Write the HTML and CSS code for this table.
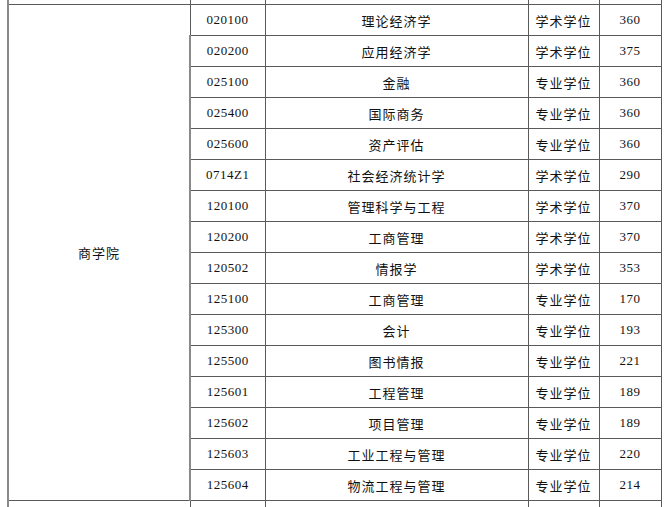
FILE: index.html
```html
<!DOCTYPE html>
<html lang="zh">
<head>
<meta charset="utf-8">
<link rel="stylesheet" href="styles.css">
</head>
<body>
<table class="grid">
  <colgroup>
    <col class="c1"><col class="c2"><col class="c3"><col class="c4"><col class="c5">
  </colgroup>
  <tr class="cut-top"><td></td><td></td><td></td><td></td><td></td></tr>
  <tr><td class="dept" rowspan="16">商学院</td><td class="num">020100</td><td class="zh">理论经济学</td><td class="zh">学术学位</td><td class="num">360</td></tr>
  <tr><td class="num">020200</td><td class="zh">应用经济学</td><td class="zh">学术学位</td><td class="num">375</td></tr>
  <tr><td class="num">025100</td><td class="zh">金融</td><td class="zh">专业学位</td><td class="num">360</td></tr>
  <tr><td class="num">025400</td><td class="zh">国际商务</td><td class="zh">专业学位</td><td class="num">360</td></tr>
  <tr><td class="num">025600</td><td class="zh">资产评估</td><td class="zh">专业学位</td><td class="num">360</td></tr>
  <tr><td class="num">0714Z1</td><td class="zh">社会经济统计学</td><td class="zh">学术学位</td><td class="num">290</td></tr>
  <tr><td class="num">120100</td><td class="zh">管理科学与工程</td><td class="zh">学术学位</td><td class="num">370</td></tr>
  <tr><td class="num">120200</td><td class="zh">工商管理</td><td class="zh">学术学位</td><td class="num">370</td></tr>
  <tr><td class="num">120502</td><td class="zh">情报学</td><td class="zh">学术学位</td><td class="num">353</td></tr>
  <tr><td class="num">125100</td><td class="zh">工商管理</td><td class="zh">专业学位</td><td class="num">170</td></tr>
  <tr><td class="num">125300</td><td class="zh">会计</td><td class="zh">专业学位</td><td class="num">193</td></tr>
  <tr><td class="num">125500</td><td class="zh">图书情报</td><td class="zh">专业学位</td><td class="num">221</td></tr>
  <tr><td class="num">125601</td><td class="zh">工程管理</td><td class="zh">专业学位</td><td class="num">189</td></tr>
  <tr><td class="num">125602</td><td class="zh">项目管理</td><td class="zh">专业学位</td><td class="num">189</td></tr>
  <tr><td class="num">125603</td><td class="zh">工业工程与管理</td><td class="zh">专业学位</td><td class="num">220</td></tr>
  <tr><td class="num">125604</td><td class="zh">物流工程与管理</td><td class="zh">专业学位</td><td class="num">214</td></tr>
  <tr class="cut-bottom"><td></td><td></td><td></td><td></td><td></td></tr>
</table>
</body>
</html>
```

FILE: styles.css
```css
html, body {
  margin: 0;
  padding: 0;
  background: #ffffff;
  overflow: hidden;
}

.grid {
  margin-left: 7px;
  border-collapse: collapse;
  table-layout: fixed;
  width: 653px;
  font-family: "Liberation Serif", "Noto Sans CJK SC", serif;
  font-size: 13px;
  color: #111111;
}

.c1 { width: 182px; }
.c2 { width: 75px; }
.c3 { width: 263px; }
.c4 { width: 71px; }
.c5 { width: 62px; }

.grid td {
  border: 1px solid #5a5a5a;
  padding: 0;
  height: 30px;
  text-align: center;
  vertical-align: middle;
  white-space: nowrap;
}

.grid td:first-child {
  border-left: 2px solid #8a8a8a;
}

.grid td:nth-child(3),
.grid tr:not(.cut-top):not(.cut-bottom) td.zh + td.zh {
  border-color: #5a5a5a;
}

.grid .cut-top td {
  height: 4px;
  border-top: none;
}

.grid .cut-bottom td {
  height: 10px;
  border-bottom: none;
}

.num {
  letter-spacing: 0.5px;
}

.zh,
.dept {
  font-family: "Noto Sans CJK SC", sans-serif;
  letter-spacing: 1px;
  font-size: 13px;
}
```
